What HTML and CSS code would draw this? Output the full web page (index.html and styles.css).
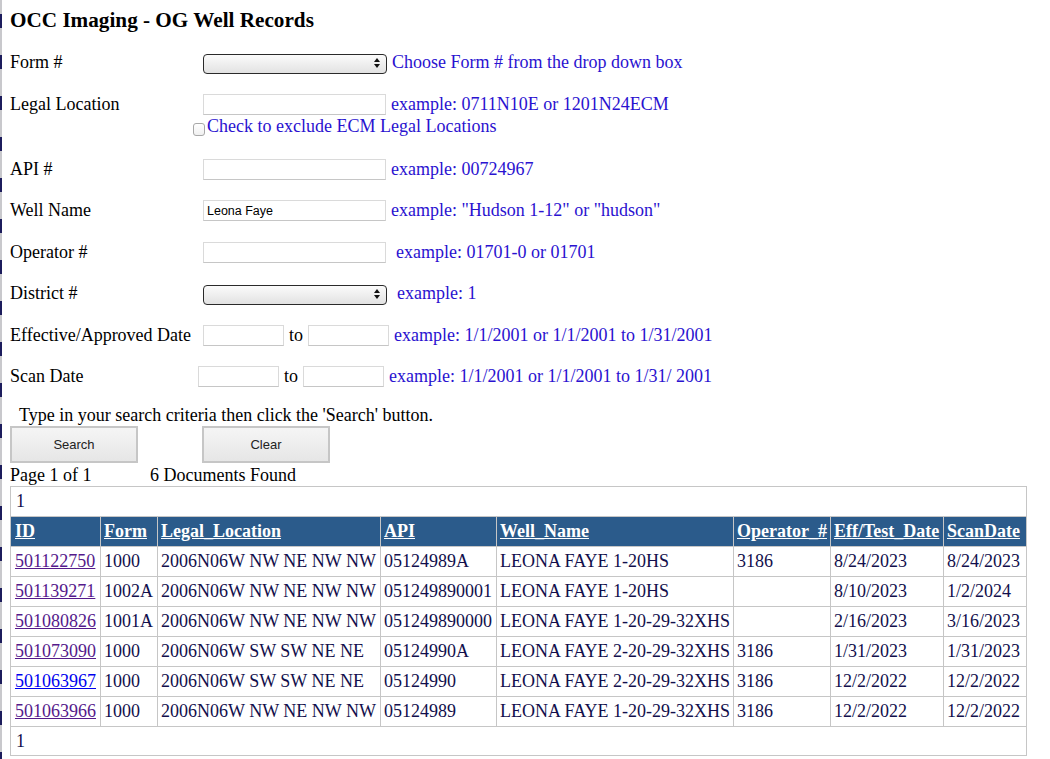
FILE: index.html
```html
<!DOCTYPE html>
<html lang="en">
<head>
  <meta charset="UTF-8" />
  <title>OCC Imaging - OG Well Records</title>
  <link rel="stylesheet" href="styles.css">
</head>
<body>
  <div class="page">
    <div class="edge"></div>
    <div class="content">
      <h1>OCC Imaging - OG Well Records</h1>

      <div class="search-form">
        <div class="row">
          <span class="lbl">Form #</span>
          <span class="select">
            <select></select>
            <svg class="arrows" width="8" height="12" viewBox="0 0 8 12"><path d="M4 1 L7 5 L1 5 Z M4 11 L7 7 L1 7 Z" fill="#111"/></svg>
          </span>
          <span class="hint">Choose Form # from the drop down box</span>
        </div>

        <div class="row">
          <span class="lbl">Legal Location</span>
          <input class="field" type="text">
          <span class="hint">example: 0711N10E or 1201N24ECM</span>
        </div>
        <div class="check-row">
          <span class="checkbox"></span><span class="hint-plain">Check to exclude ECM Legal Locations</span>
        </div>

        <div class="row">
          <span class="lbl">API #</span>
          <input class="field" type="text">
          <span class="hint">example: 00724967</span>
        </div>

        <div class="row">
          <span class="lbl">Well Name</span>
          <input class="field" type="text" value="Leona Faye">
          <span class="hint">example: "Hudson 1-12" or "hudson"</span>
        </div>

        <div class="row">
          <span class="lbl">Operator #</span>
          <input class="field" type="text">
          <span class="hint wide">example: 01701-0 or 01701</span>
        </div>

        <div class="row">
          <span class="lbl">District #</span>
          <span class="select">
            <select></select>
            <svg class="arrows" width="8" height="12" viewBox="0 0 8 12"><path d="M4 1 L7 5 L1 5 Z M4 11 L7 7 L1 7 Z" fill="#111"/></svg>
          </span>
          <span class="hint wide">example: 1</span>
        </div>

        <div class="row">
          <span class="lbl">Effective/Approved Date</span>
          <input class="field short" type="text">
          <span class="to">to</span>
          <input class="field short" type="text">
          <span class="hint">example: 1/1/2001 or 1/1/2001 to 1/31/2001</span>
        </div>

        <div class="row scan">
          <span class="lbl">Scan Date</span>
          <input class="field short" type="text">
          <span class="to">to</span>
          <input class="field short" type="text">
          <span class="hint">example: 1/1/2001 or 1/1/2001 to 1/31/ 2001</span>
        </div>
      </div>

      <p class="instructions">Type in your search criteria then click the 'Search' button.</p>
      <div class="buttons">
        <button class="btn">Search</button>
        <button class="btn">Clear</button>
      </div>

      <div class="status">
        <span class="page-count">Page 1 of 1</span><span>6 Documents Found</span>
      </div>

      <table class="results">
        <colgroup>
          <col style="width:90px"><col style="width:57px"><col style="width:223px"><col style="width:116px">
          <col style="width:237px"><col style="width:97px"><col style="width:113px"><col style="width:83px">
        </colgroup>
        <tr class="pager"><td colspan="8">1</td></tr>
        <tr class="head">
          <th><a href="#">ID</a></th>
          <th><a href="#">Form</a></th>
          <th><a href="#">Legal_Location</a></th>
          <th><a href="#">API</a></th>
          <th><a href="#">Well_Name</a></th>
          <th><a href="#">Operator_#</a></th>
          <th><a href="#">Eff/Test_Date</a></th>
          <th><a href="#">ScanDate</a></th>
        </tr>
        <tr>
          <td><a class="visited" href="#">501122750</a></td><td>1000</td><td>2006N06W NW NE NW NW</td><td>05124989A</td>
          <td>LEONA FAYE 1-20HS</td><td>3186</td><td>8/24/2023</td><td>8/24/2023</td>
        </tr>
        <tr>
          <td><a class="visited" href="#">501139271</a></td><td>1002A</td><td>2006N06W NW NE NW NW</td><td>051249890001</td>
          <td>LEONA FAYE 1-20HS</td><td></td><td>8/10/2023</td><td>1/2/2024</td>
        </tr>
        <tr>
          <td><a class="visited" href="#">501080826</a></td><td>1001A</td><td>2006N06W NW NE NW NW</td><td>051249890000</td>
          <td>LEONA FAYE 1-20-29-32XHS</td><td></td><td>2/16/2023</td><td>3/16/2023</td>
        </tr>
        <tr>
          <td><a class="visited" href="#">501073090</a></td><td>1000</td><td>2006N06W SW SW NE NE</td><td>05124990A</td>
          <td>LEONA FAYE 2-20-29-32XHS</td><td>3186</td><td>1/31/2023</td><td>1/31/2023</td>
        </tr>
        <tr>
          <td><a href="#">501063967</a></td><td>1000</td><td>2006N06W SW SW NE NE</td><td>05124990</td>
          <td>LEONA FAYE 2-20-29-32XHS</td><td>3186</td><td>12/2/2022</td><td>12/2/2022</td>
        </tr>
        <tr>
          <td><a class="visited" href="#">501063966</a></td><td>1000</td><td>2006N06W NW NE NW NW</td><td>05124989</td>
          <td>LEONA FAYE 1-20-29-32XHS</td><td>3186</td><td>12/2/2022</td><td>12/2/2022</td>
        </tr>
        <tr class="pager last"><td colspan="8">1</td></tr>
      </table>
    </div>
  </div>
</body>
</html>
```

FILE: styles.css
```css
body {
  margin: 0;
  background: #fff;
  font-family: "Liberation Serif", "Times New Roman", serif;
  font-size: 18px;
  color: #000;
}
.page {
  display: flex;
  min-height: 759px;
}
.edge {
  width: 2px;
  flex: none;
  background: repeating-linear-gradient(180deg, #c8c8cc 0px, #c8c8cc 14px, #1c1c5c 14px, #1c1c5c 28px, #c8c8cc 28px, #c8c8cc 41px);
}
.content {
  padding-left: 8px;
  flex: 1;
}
h1 {
  font-size: 21.2px;
  font-weight: bold;
  margin: 8px 0 0 0;
  line-height: 25px;
}
.search-form {
  margin-top: 9px;
}
.row {
  display: flex;
  align-items: center;
  height: 41.4px;
}
.lbl {
  width: 193px;
  flex: none;
}
.hint, .hint-plain {
  color: #2a12d0;
  margin-left: 5px;
}
.hint.wide {
  margin-left: 10px;
}
.hint-plain {
  margin-left: 2px;
}
.field {
  box-sizing: border-box;
  width: 183px;
  height: 21px;
  margin: 0;
  padding: 0 3px;
  border: 1px solid #dadada;
  border-bottom-color: #c6c6c6;
  font-family: "Liberation Sans", Arial, sans-serif;
  font-size: 12.5px;
  color: #000;
  outline: none;
}
.field.short {
  width: 81px;
}
.to {
  margin: 0 5px;
}
.row.scan .field:first-of-type {
  margin-left: -5px;
}
.select {
  position: relative;
  display: inline-block;
  width: 184px;
  height: 20px;
}
.select select {
  appearance: none;
  -webkit-appearance: none;
  box-sizing: border-box;
  width: 100%;
  height: 100%;
  margin: 0;
  border: 1px solid #2a2a2a;
  border-radius: 4px;
  background: linear-gradient(180deg, #fbfbfb 0%, #ececec 60%, #e2e2e2 100%);
}
.select .arrows {
  position: absolute;
  right: 6px;
  top: 4px;
}
.check-row {
  display: flex;
  align-items: center;
  height: 20px;
  margin: -8px 0 12px 0;
  padding-left: 183px;
}
.checkbox {
  box-sizing: border-box;
  width: 12px;
  height: 13px;
  margin-top: 5px;
  border: 1px solid #a8a8a8;
  border-radius: 3px;
  background: linear-gradient(180deg, #ffffff, #f0f0f0);
}
.instructions {
  margin: 8px 0 0 9px;
  line-height: 20px;
}
.buttons {
  display: flex;
  gap: 64px;
  margin-top: 1px;
}
.btn {
  box-sizing: border-box;
  width: 128px;
  height: 37px;
  margin: 0;
  border: 2px solid #c6c6c6;
  background: linear-gradient(180deg, #f5f5f5 0%, #e6e6e6 100%);
  font-family: "Liberation Sans", Arial, sans-serif;
  font-size: 13px;
  color: #222;
}
.status {
  line-height: 20px;
  margin-top: 2px;
}
.page-count {
  display: inline-block;
  width: 140px;
}
.results {
  margin-top: 1px;
  width: 1016px;
  table-layout: fixed;
  border-collapse: collapse;
  border: 1px solid #c6c6c6;
  color: #120f4c;
}
.results td, .results th {
  border: 1px solid #c6c6c6;
  height: 29px;
  padding: 0 0 0 3px;
  text-align: left;
  white-space: nowrap;
  overflow: hidden;
}
.results td:first-child, .results th:first-child {
  padding-left: 4px;
}
.results .head th {
  background: #2b5b8b;
  border-color: #c6c6c6;
}
.results .head a {
  color: #fff;
  font-weight: bold;
}
.results a {
  color: #0000ee;
}
.results a.visited {
  color: #551a8b;
}
.results .pager td {
  border-left: none;
  border-right: none;
  padding-left: 5px;
}
.results .pager.last td {
  height: 28px;
}
```
